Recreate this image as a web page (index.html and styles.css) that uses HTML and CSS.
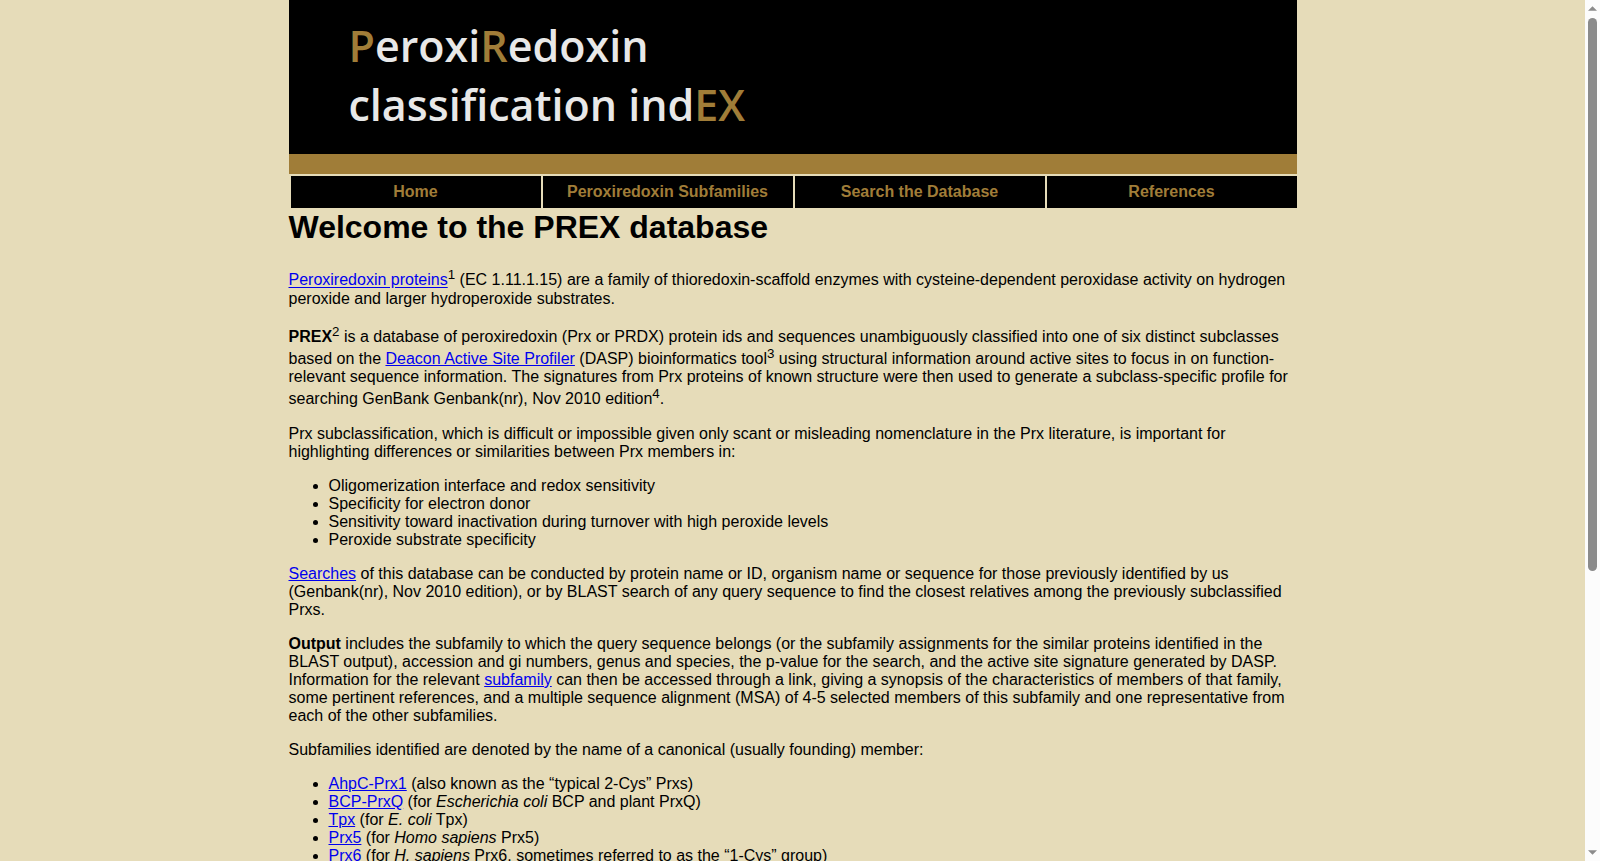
FILE: index.html
```html
<!DOCTYPE html>
<html lang="en">
  <head>
    <meta charset="UTF-8" />
    <meta name="viewport" content="width=device-width, initial-scale=1.0" />
    <title>PREX</title>
    <link rel="stylesheet" href="styles.css">
  </head>

  <body>
    <div class="page">
      <div class="container">
        <header class="banner">
          <div class="logo">
            <div><span>P</span>eroxi<span>R</span>edoxin</div>
            <div>classification ind<span>EX</span></div>
          </div>
        </header>

        <nav>
          <ul class="menu">
            <li><a href="#">Home</a></li>
            <li><a href="#">Peroxiredoxin Subfamilies</a></li>
            <li><a href="#">Search the Database</a></li>
            <li><a href="#">References</a></li>
          </ul>
        </nav>

        <main class="content">
          <h1>Welcome to the PREX database</h1>

          <p><a href="#">Peroxiredoxin proteins</a><sup>1</sup> (EC 1.11.1.15) are a family of thioredoxin-scaffold enzymes with cysteine-dependent peroxidase activity on hydrogen peroxide and larger hydroperoxide substrates.</p>

          <p><strong>PREX</strong><sup>2</sup> is a database of peroxiredoxin (Prx or PRDX) protein ids and sequences unambiguously classified into one of six distinct subclasses based on the <a href="#">Deacon Active Site Profiler</a> (DASP) bioinformatics tool<sup>3</sup> using structural information around active sites to focus in on function-relevant sequence information. The signatures from Prx proteins of known structure were then used to generate a subclass-specific profile for searching GenBank Genbank(nr), Nov 2010 edition<sup>4</sup>.</p>

          <p>Prx subclassification, which is difficult or impossible given only scant or misleading nomenclature in the Prx literature, is important for highlighting differences or similarities between Prx members in:</p>

          <ul>
            <li>Oligomerization interface and redox sensitivity</li>
            <li>Specificity for electron donor</li>
            <li>Sensitivity toward inactivation during turnover with high peroxide levels</li>
            <li>Peroxide substrate specificity</li>
          </ul>

          <p><a href="#">Searches</a> of this database can be conducted by protein name or ID, organism name or sequence for those previously identified by us (Genbank(nr), Nov 2010 edition), or by BLAST search of any query sequence to find the closest relatives among the previously subclassified Prxs.</p>

          <p><strong>Output</strong> includes the subfamily to which the query sequence belongs (or the subfamily assignments for the similar proteins identified in the BLAST output), accession and gi numbers, genus and species, the p-value for the search, and the active site signature generated by DASP. Information for the relevant <a href="#">subfamily</a> can then be accessed through a link, giving a synopsis of the characteristics of members of that family, some pertinent references, and a multiple sequence alignment (MSA) of 4-5 selected members of this subfamily and one representative from each of the other subfamilies.</p>

          <p>Subfamilies identified are denoted by the name of a canonical (usually founding) member:</p>

          <ul>
            <li><a href="#">AhpC-Prx1</a> (also known as the “typical 2-Cys” Prxs)</li>
            <li><a href="#">BCP-PrxQ</a> (for <em>Escherichia coli</em> BCP and plant PrxQ)</li>
            <li><a href="#">Tpx</a> (for <em>E. coli</em> Tpx)</li>
            <li><a href="#">Prx5</a> (for <em>Homo sapiens</em> Prx5)</li>
            <li><a href="#">Prx6</a> (for <em>H. sapiens</em> Prx6, sometimes referred to as the “1-Cys” group)</li>
          </ul>
        </main>
      </div>
    </div>

    <div class="scrollbar" aria-hidden="true">
      <svg width="9" height="5" viewBox="0 0 10 5"><path d="M0 5L5 0L10 5Z" /></svg>
      <div class="track">
        <div class="thumb"></div>
      </div>
      <svg width="9" height="5" viewBox="0 0 10 5"><path d="M0 0L5 5L10 0Z" /></svg>
    </div>
  </body>
</html>
```
FILE: styles.css
```css
body {
  display: flex;
  height: 100vh;
  margin: 0;
  font-family: "Liberation Sans", Arial, sans-serif;
  background-color: #e6dcb9;
  color: #000;
}

.page {
  flex: 1;
  overflow-y: auto;
  scrollbar-width: none;
}

.container {
  max-width: 1008px;
  margin: 0 auto;
}

.banner {
  padding: 16px 60px 20px;
  background-color: #000;
  border-bottom: 20px solid #a07d38;
}

.logo {
  font-family: "Open Sans", sans-serif;
  font-size: 43px;
  font-weight: 600;
  line-height: 59px;
  color: #e8e8e8;
}

.logo span {
  color: #a07d38;
}

.menu {
  display: grid;
  grid-template-columns: repeat(4, 1fr);
  gap: 2px;
  margin: 0;
  padding: 2px 0 0 2px;
  list-style: none;
}

.menu a {
  display: block;
  background-color: #000;
  color: #a07d38;
  font-weight: bold;
  line-height: 32px;
  text-align: center;
  text-decoration: none;
}

.content {
  padding-top: 1px;
}

.content h1 {
  margin-top: 0;
  font-size: 32px;
}

.content a {
  color: #0000ee;
}

.scrollbar {
  display: flex;
  flex-direction: column;
  align-items: center;
  width: 15px;
  padding: 6px 0;
  box-sizing: border-box;
  background-color: #fcfcfc;
  fill: #8b8b8b;
}

.scrollbar svg {
  display: block;
}

.track {
  flex: 1;
  width: 9px;
  margin: 7px 0;
}

.thumb {
  height: 67%;
  border-radius: 5px;
  background-color: #8b8b8b;
}
```
